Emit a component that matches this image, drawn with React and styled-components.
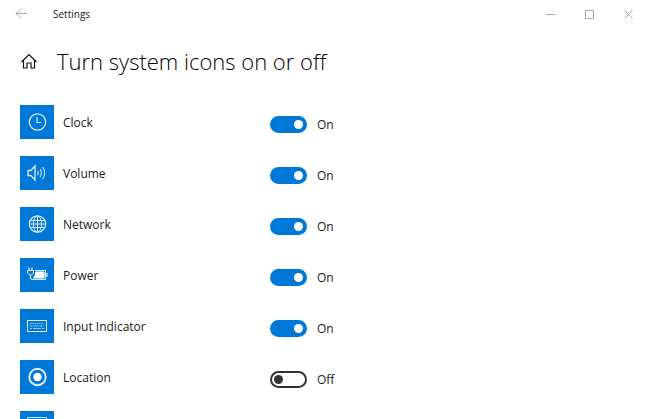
import React, { useState } from 'react';
import styled, { createGlobalStyle } from 'styled-components';

const GlobalStyle = createGlobalStyle`
  * {
    box-sizing: border-box;
  }

  body {
    margin: 0;
    background: #fff;
    color: #1a1a1a;
    font-family: 'Segoe UI', 'Open Sans', 'Noto Sans', sans-serif;
    font-size: 12px;
    line-height: 16px;
  }
`;

const Window = styled.div`
  display: flex;
  flex-direction: column;
  height: 100vh;
  overflow: hidden;
`;

const TitleBar = styled.header`
  display: flex;
  flex: none;
  align-items: center;
  height: 28px;
`;

const BarButton = styled.button`
  display: flex;
  align-items: center;
  justify-content: center;
  width: ${props => (props.$wide ? 41 : 39)}px;
  height: 28px;
  padding: 0;
  border: 0;
  background: none;
  color: #a8a8a8;
`;

const WindowTitle = styled.div`
  flex: 1;
  padding-left: 12px;
  font-size: 10px;
`;

const Heading = styled.div`
  display: flex;
  flex: none;
  align-items: center;
  gap: 19px;
  padding: 15px 20px 0;
`;

const HomeLink = styled.a`
  display: flex;
  color: #111;
`;

const PageTitle = styled.h1`
  margin: 0;
  font-size: 22px;
  font-weight: 300;
  line-height: 36px;
  color: #000;
`;

const List = styled.ul`
  display: flex;
  flex-direction: column;
  gap: 17px;
  margin: 0;
  padding: 26px 20px 0;
  list-style: none;
`;

const Row = styled.li`
  display: grid;
  grid-template-columns: 34px 198px 1fr;
  column-gap: 9px;
  align-items: center;
`;

const Tile = styled.div`
  display: flex;
  align-items: center;
  justify-content: center;
  width: 34px;
  height: 34px;
  background: #0078d7;
  color: #d9ebfa;
`;

const Label = styled.label`
  padding-top: 2px;
`;

const Control = styled.div`
  display: flex;
  align-items: center;
  gap: 10px;
  padding-top: 4px;
`;

const State = styled.span`
  padding-top: 2px;
`;

const Switch = styled.input`
  display: flex;
  flex: none;
  align-items: center;
  width: 37px;
  height: 17px;
  margin: 0;
  padding: 0 2px;
  border: 2px solid #333;
  border-radius: 9px;
  background: #fff;
  appearance: none;

  &::before {
    content: '';
    width: 9px;
    height: 9px;
    border-radius: 50%;
    background: #333;
  }

  &:checked {
    justify-content: flex-end;
    border-color: #0078d7;
    background: #0078d7;
  }

  &:checked::before {
    background: #fff;
  }
`;

const Icon = ({ size = 20, children }) => (
  <svg
    width={size}
    height={size}
    viewBox={`0 0 ${size} ${size}`}
    fill="none"
    stroke="currentColor"
    aria-hidden="true"
  >
    {children}
  </svg>
);

const ClockIcon = () => (
  <Icon>
    <circle cx="10.5" cy="10" r="8.2" strokeWidth="1.3" />
    <path d="M10 5v5.5h4" strokeWidth="1.2" />
  </Icon>
);

const VolumeIcon = () => (
  <Icon>
    <path d="M1 7.5h2.8L8 3v14l-4.2-4.5H1z" strokeWidth="1.3" />
    <path
      d="M10.5 8q1.4 2 0 4.2M13 6q2.8 4 0 8.2M15.6 4q4.2 6 0 12.2"
      strokeWidth="1.1"
    />
  </Icon>
);

const NetworkIcon = () => (
  <Icon>
    <circle cx="10.5" cy="10" r="8.2" strokeWidth="1.2" />
    <ellipse cx="10.5" cy="10" rx="4" ry="8.2" />
    <path d="M10.5 2v16M3.5 6.5h14M3.5 13.5h14M2.5 10h16" />
  </Icon>
);

const PowerIcon = () => (
  <Icon size={22}>
    <path d="M9 6.5h10.500v9H6" />
    <path d="M9.500 8H18v6H7.500l2-3z" fill="#fff" stroke="#fff" />
    <path d="M20.900 9v4" strokeWidth="1.4" />
    <path d="M3 3.500v3M6 3.500v3" strokeWidth="1.3" />
    <path d="M1.500 6.500h6v2.500L5.500 11h-2l-2-2z" />
    <path d="M4.500 11v3q0 1.500 2 1.500" strokeWidth="1.2" />
  </Icon>
);

const KeyboardIcon = () => (
  <Icon>
    <rect x="0.5" y="4.5" width="19" height="11" />
    <g opacity="0.7">
      <path d="M3 7.5h14" strokeDasharray="1.5 0.8" />
      <path d="M3 10h14" strokeDasharray="2 0.5" />
      <path d="M3 12.5h2M6 12.5h8M15 12.5h2" />
    </g>
  </Icon>
);

const LocationIcon = () => (
  <Icon>
    <circle cx="10.5" cy="10" r="8.2" strokeWidth="2" />
    <circle cx="10.5" cy="10" r="4.2" fill="#fff" stroke="none" />
  </Icon>
);

const ActionCenterIcon = () => (
  <Icon size={22}>
    <path d="M1.500 0.500h19v16h-9l-4 4v-4h-6z" />
  </Icon>
);

const items = [
  { id: 'clock', label: 'Clock', Glyph: ClockIcon, on: true },
  { id: 'volume', label: 'Volume', Glyph: VolumeIcon, on: true },
  { id: 'network', label: 'Network', Glyph: NetworkIcon, on: true },
  { id: 'power', label: 'Power', Glyph: PowerIcon, on: true },
  { id: 'input', label: 'Input Indicator', Glyph: KeyboardIcon, on: true },
  { id: 'location', label: 'Location', Glyph: LocationIcon, on: false },
  { id: 'action', label: 'Action Center', Glyph: ActionCenterIcon, on: true },
];

const SettingRow = ({ id, label, Glyph, on }) => {
  const [checked, setChecked] = useState(on);

  return (
    <Row>
      <Tile>
        <Glyph />
      </Tile>
      <Label htmlFor={id}>{label}</Label>
      <Control>
        <Switch
          id={id}
          type="checkbox"
          role="switch"
          checked={checked}
          onChange={() => setChecked(!checked)}
        />
        <State>{checked ? 'On' : 'Off'}</State>
      </Control>
    </Row>
  );
};

export default function App() {
  return (
    <Window>
      <GlobalStyle />
      <TitleBar>
        <BarButton $wide aria-label="Back">
          <Icon size={12}>
            <path d="M12 5.5H1M6 0.5l-5 5 5 5" />
          </Icon>
        </BarButton>
        <WindowTitle>Settings</WindowTitle>
        <BarButton aria-label="Minimize">
          <Icon size={9}>
            <path d="M0 4.5h9" />
          </Icon>
        </BarButton>
        <BarButton aria-label="Maximize">
          <Icon size={9}>
            <path d="M0.5 0.5h8v8h-8z" />
          </Icon>
        </BarButton>
        <BarButton aria-label="Close">
          <Icon size={9}>
            <path d="M0.5 0.5l8 8M8.5 0.5l-8 8" />
          </Icon>
        </BarButton>
      </TitleBar>

      <Heading>
        <HomeLink href="#home" aria-label="Home">
          <Icon size={18}>
            <path
              d="M1.500 10L9 2.500l7.500 7.500M3.500 8.500v7.500H7v-5h4v5h3.500V8.500"
              strokeWidth="1.2"
            />
          </Icon>
        </HomeLink>
        <PageTitle>Turn system icons on or off</PageTitle>
      </Heading>

      <List>
        {items.map(item => (
          <SettingRow key={item.id} {...item} />
        ))}
      </List>
    </Window>
  );
}
